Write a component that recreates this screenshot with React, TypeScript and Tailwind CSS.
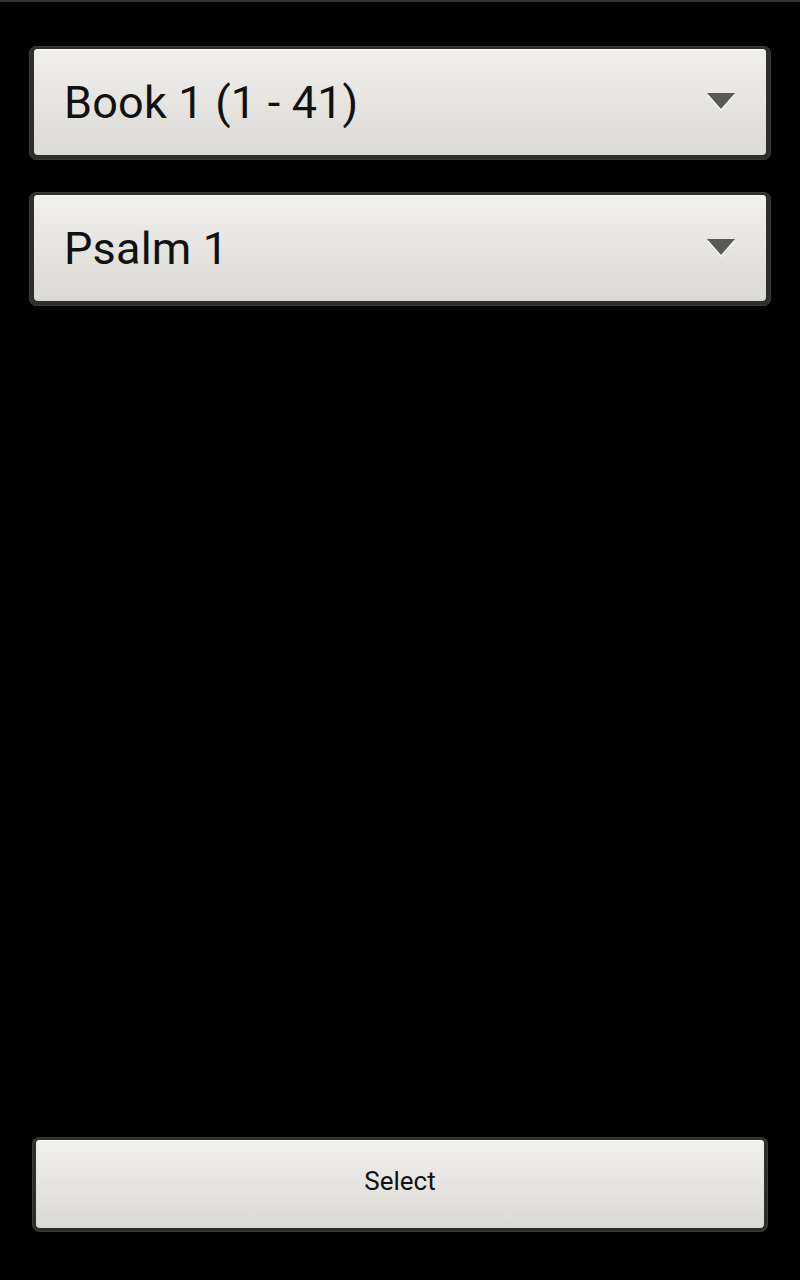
const font = { fontFamily: "Roboto, 'Noto Sans', sans-serif" };

function Caret() {
  return (
    <svg width="30" height="19" viewBox="0 0 30 19" className="shrink-0">
      <polygon points="1,2 29,2 15,18" fill="#ffffff" opacity="0.9" />
      <polygon points="1,0 29,0 15,16" fill="#595959" />
    </svg>
  );
}

function Spinner({ label }: { label: string }) {
  return (
    <div className="mx-[29px] rounded-[8px] bg-[#2d2d2d] px-[5px] pt-[3px] pb-[5px] shadow-[inset_0_0_0_1px_#3a3a3a]">
      <div className="flex h-[106px] items-center justify-between rounded-[4px] bg-gradient-to-b from-[#f2f0ec] to-[#dbd9d5] pl-[30px] pr-[30px] shadow-[inset_0_1px_0_#fbfaf8]">
        <span className="text-[45px] leading-none tracking-[0.2px] text-[#111]" style={font}>
          {label}
        </span>
        <Caret />
      </div>
    </div>
  );
}

export default function App() {
  return (
    <div className="flex h-[1280px] flex-col bg-black">
      <div className="h-[2px] bg-[#333]" />
      <div className="mt-[44px] flex flex-col gap-[32px]">
        <Spinner label="Book 1 (1 - 41)" />
        <Spinner label="Psalm 1" />
      </div>
      <div className="flex-1" />
      <div className="mx-[32px] mb-[48px] rounded-[8px] bg-[#2d2d2d] px-[4px] pt-[3px] pb-[4px] shadow-[inset_0_0_0_1px_#3a3a3a]">
        <button className="flex h-[88px] w-full items-center justify-center rounded-[4px] bg-gradient-to-b from-[#f2f0ec] to-[#dbd9d5] pb-[6px] shadow-[inset_0_1px_0_#fbfaf8]">
          <span className="text-[26px] text-[#111]" style={font}>
            Select
          </span>
        </button>
      </div>
    </div>
  );
}
